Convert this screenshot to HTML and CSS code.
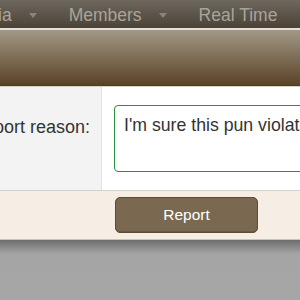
FILE: index.html
```html
<!DOCTYPE html>
<html>
<head>
<meta charset="utf-8">
<link rel="stylesheet" href="styles.css">
</head>
<body>
<nav class="nav">
  <span class="nav-item">Media</span><span class="caret"></span>
  <span class="nav-item">Members</span><span class="caret"></span>
  <span class="nav-item">Real Time</span>
</nav>
<div class="overlay">
  <div class="header"></div>
  <div class="form-row">
    <div class="label-col"><span class="label">Report reason:</span></div>
    <div class="input-col"><div class="textarea">I'm sure this pun violates the rules</div></div>
  </div>
  <div class="footer">
    <button class="btn">Report</button>
  </div>
</div>
<div class="backdrop"></div>
</body>
</html>
```
FILE: styles.css
```css
html, body { margin: 0; padding: 0; }
body {
  width: 300px; height: 300px; overflow: hidden;
  font-family: "Liberation Sans", Arial, sans-serif;
  background: #a6a6a6;
}
.nav {
  height: 28px;
  background: linear-gradient(#6e675e, #4b4336);
  display: flex; align-items: center;
  white-space: nowrap;
  margin-left: -36px;
  color: #a9a49b;
  font-size: 17.5px;
}
.nav-item { line-height: 28px; padding-top: 2px; }
.caret {
  width: 0; height: 0;
  border-left: 4px solid transparent;
  border-right: 4px solid transparent;
  border-top: 5px solid #8c857a;
  margin: 3px 32px 0 17px;
}
.overlay { width: 300px; }
.header {
  height: 55px;
  border-top: 2px solid #e6e0d6;
  background: linear-gradient(#a29786, #5a4427);
  border-bottom: 1px solid #4e3c22;
}
.form-row {
  display: grid;
  grid-template-columns: 102px 1fr;
  height: 103px;
  background: #fff;
  border-top: 1px solid #d9d4cc;
}
.label-col {
  background: #f3f3f3;
  border-right: 1px solid #e2e2e2;
  display: flex; justify-content: flex-end;
  padding: 30px 11px 0 0;
}
.label { font-size: 18px; color: #333; white-space: nowrap; }
.input-col { padding: 18px 0 0 12px; overflow: hidden; }
.textarea {
  height: 56px; width: 260px;
  border: 1px solid #2a8f3e; border-radius: 4px;
  box-sizing: content-box;
  padding: 9px 0 0 9px;
  font-size: 17.7px; color: #333; white-space: nowrap; overflow: hidden;
}
.footer {
  height: 50px;
  background: #f6eee4;
  border-top: 1px solid #d4cfc8;
  border-bottom: 1px solid #c9c4bd;
  padding: 6px 0 0 115px;
  box-sizing: border-box;
}
.btn {
  width: 143px; height: 36px;
  background: #7a6950;
  border: 1px solid #5d4b33; border-radius: 5px;
  color: #fff; font-family: inherit; font-size: 15.5px;
  box-shadow: inset 0 -1px 0 rgba(0,0,0,0.15);
}
.backdrop {
  height: 70px;
  background: linear-gradient(#6d6d6d, #a5a5a5 14px, #a6a6a6);
}
```
